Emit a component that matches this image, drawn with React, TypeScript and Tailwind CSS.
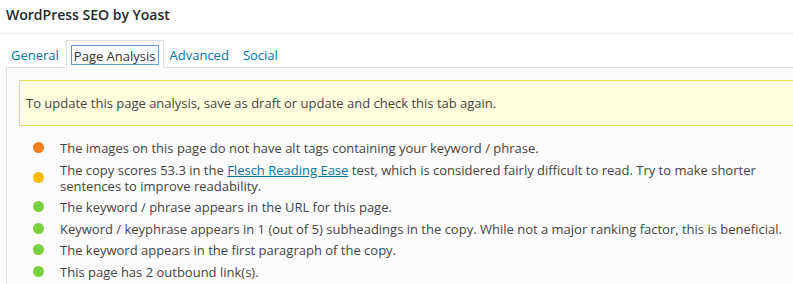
import React from "react";

const items = [
  { color: "bg-[#ee7c1b]", text: <>The images on this page do not have alt tags containing your keyword / phrase.</> },
  {
    color: "bg-[#ffba00]",
    text: (
      <>
        The copy scores 53.3 in the{" "}
        <a href="#" className="text-[#0073aa] underline">
          Flesch Reading Ease
        </a>{" "}
        test, which is considered fairly difficult to read. Try to make shorter sentences to improve readability.
      </>
    ),
  },
  { color: "bg-[#7ad03a]", text: <>The keyword / phrase appears in the URL for this page.</> },
  {
    color: "bg-[#7ad03a]",
    text: <>Keyword / keyphrase appears in 1 (out of 5) subheadings in the copy. While not a major ranking factor, this is beneficial.</>,
  },
  { color: "bg-[#7ad03a]", text: <>The keyword appears in the first paragraph of the copy.</> },
  { color: "bg-[#7ad03a]", text: <>This page has 2 outbound link(s).</> },
];

export default function App() {
  return (
    <div className="w-[793px] h-[284px] overflow-hidden bg-white font-['Open_Sans',sans-serif] text-[13px] text-[#444]">
      {/* Header */}
      <div className="h-[34px] border-b border-[#eeeeee] px-[6px] pt-[5px]">
        <h2 className="text-[14px] font-semibold text-[#23282d] leading-[20px]">WordPress SEO by Yoast</h2>
      </div>

      {/* Tabs */}
      <div className="flex items-end pl-[6px] pt-[6px]">
        <a className="pl-[5px] pr-[7px] pb-[3px] text-[#0073aa] leading-[18px]">General</a>
        <div className="mb-[-1px] h-[28px] border border-b-0 border-[#dddddd] bg-white px-[4px] pt-[4px]">
          <span className="block h-[20px] border border-[#5b9dd9] px-[2px] pt-[2px] leading-[17px] text-[#333]">
            Page Analysis
          </span>
        </div>
        <a className="pl-[6px] pr-[14px] pb-[3px] text-[#0073aa] leading-[18px]">Advanced</a>
        <a className="pb-[3px] text-[#0073aa] leading-[18px]">Social</a>
      </div>

      {/* Panel */}
      <div className="ml-[6px] h-[300px] border-l border-t border-[#dddddd] bg-[#fcfcfc] pl-[12px] pt-[12px]">
        <div className="mr-[-12px] border border-[#e6db55] bg-[#ffffe0] px-[6px] py-[13px] leading-[18px]">
          To update this page analysis, save as draft or update and check this tab again.
        </div>

        <ul className="mt-[14px] pl-[14px] pr-[4px]">
          {items.map((item, i) => (
            <li key={i} className="mb-[5.5px] flex items-start leading-[16px]">
              <span className={`${item.color} mr-[16px] mt-[-1px] h-[11px] w-[11px] shrink-0 self-center rounded-full`} />
              <span>{item.text}</span>
            </li>
          ))}
        </ul>
      </div>
    </div>
  );
}
